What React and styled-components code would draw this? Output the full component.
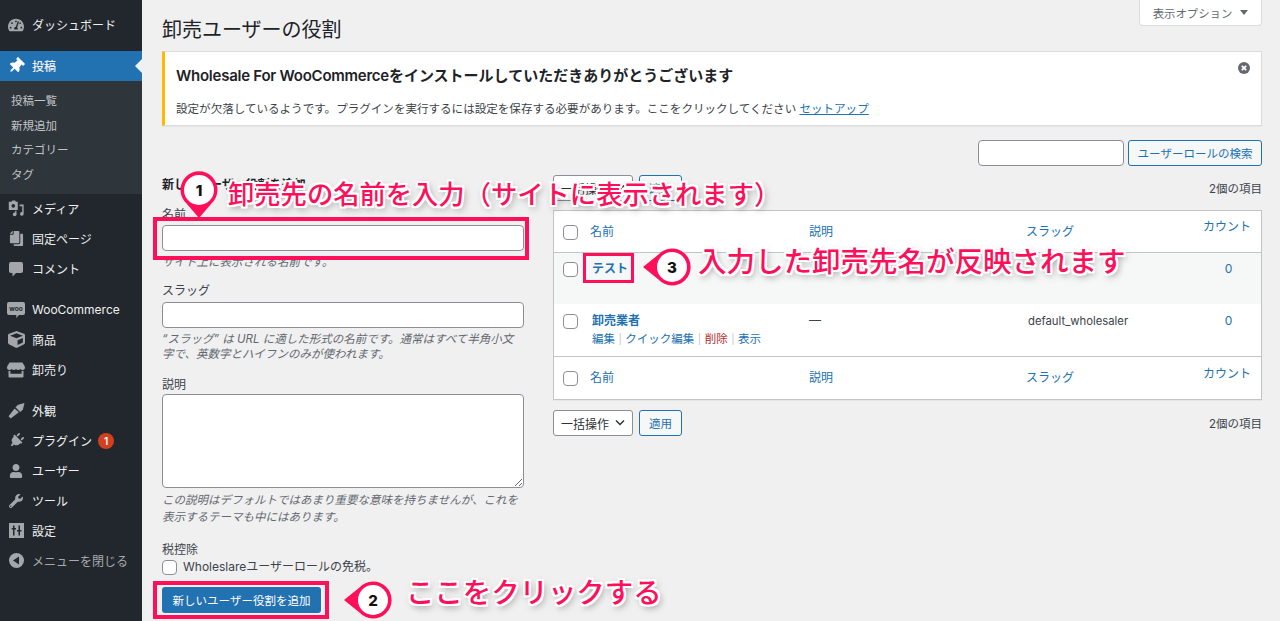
import React from "react";
import styled, { createGlobalStyle } from "styled-components";
import {
  FaTachometerAlt, FaThumbtack, FaCopy, FaCube, FaStore, FaPlug, FaUser, FaWrench,
} from "react-icons/fa";

const Global = createGlobalStyle`
  html, body { margin: 0; padding: 0; height: 621px; overflow: hidden; background: #f0f0f1; }
  * { box-sizing: border-box; }
  body { font-family: "Inter", "Noto Sans CJK JP", sans-serif; font-size: 12px; color: #3c434a; }
`;

const Shell = styled.div`
  position: relative; display: flex; width: 1280px; height: 621px; overflow: hidden;
`;

/* ---------- sidebar ---------- */
const Sidebar = styled.nav`
  width: 142px; flex: none; height: 100%; background: #21272c; padding-top: 10px;
  display: flex; flex-direction: column;
`;
const MenuItem = styled.div`
  position: relative; display: flex; align-items: center; height: 30px; flex: none;
  margin-top: ${p => p.$gap || 0}px; padding: 0 0 1px 8px; gap: 8px;
  font-size: 12px; color: ${p => p.$muted ? "#a7aaad" : "#f0f0f1"};
  background: ${p => p.$active ? "#2271b1" : "transparent"};
  font-weight: ${p => p.$active ? 500 : 400};
  ${p => p.$active && `
    &::after {
      content: ""; position: absolute; right: 0; top: 8px;
      border: 7px solid transparent; border-right-color: #f0f0f1; border-left-width: 0;
    }
  `}
`;
const MenuIcon = styled.span`
  width: 16px; height: 16px; flex: none; display: flex; align-items: center; justify-content: center;
  color: ${p => p.$active ? "#ffffff" : "#a3a7ab"};
  font-size: ${p => p.$size || 15}px;
  svg { display: block; flex: none; }
`;
const SubMenu = styled.div`
  background: #2e353b; padding: 8px 0 7px 11px; flex: none;
`;
const SubItem = styled.div`
  height: 24.5px; line-height: 24.5px; font-size: 11.5px; color: #c3c4c7;
`;
const Badge = styled.span`
  width: 16px; height: 16px; margin-left: -2px; border-radius: 50%; background: #d1411f; color: #fff;
  font-size: 10px; font-weight: 600; display: flex; align-items: center; justify-content: center;
`;

/* ---------- main ---------- */
const Main = styled.main`
  flex: 1; min-width: 0; padding: 0 18px 0 20px; display: flex; flex-direction: column;
`;
const TitleRow = styled.div`
  display: flex; justify-content: space-between; align-items: flex-start; height: 51px; flex: none;
`;
const Title = styled.h1`
  margin: 17px 0 0; font-size: 20px; line-height: 26px; font-weight: 400; color: #1d2327;
`;
const ScreenTab = styled.div`
  width: 123px; height: 26px; background: #fff; border: 1px solid #dcdcde; border-top: 0;
  border-radius: 0 0 4px 4px; display: flex; align-items: center; justify-content: center; gap: 8px;
  font-size: 11.4px; color: #646970;
`;
const TabCaret = styled.span`
  border: 4.5px solid transparent; border-top: 5px solid #646970; border-bottom: 0;
`;
const Notice = styled.section`
  position: relative; height: 75px; flex: none; background: #fff;
  border: 1px solid #dcdcde; border-left: 3px solid #ffb900;
  padding: 14px 0 0 11px; box-shadow: 0 1px 1px rgba(0,0,0,.04);
`;
const NoticeTitle = styled.div`
  font-size: 15px; line-height: 20px; font-weight: 600; color: #1d2327;
`;
const Latin = styled.span`
  letter-spacing: -0.25px;
`;
const NoticeText = styled.div`
  margin-top: 14px; font-size: 11.55px; line-height: 18px; color: #3c434a;
`;
const Link = styled.a`
  color: #2271b1; text-decoration: underline;
`;
const Dismiss = styled.span`
  position: absolute; right: 11px; top: 10px; width: 12px; height: 12px; svg { display: block; }
`;
const SearchRow = styled.div`
  display: flex; justify-content: flex-end; gap: 4px; margin-top: 14px; flex: none;
`;
const TextInput = styled.input`
  display: block; width: ${p => p.$w || "100%"}; height: 26px; background: #fff; margin: 0;
  border: 1px solid #8c8f94; border-radius: 4px; outline: none;
`;
const OutlineButton = styled.div`
  width: ${p => p.$w}px; height: 26px; display: flex; align-items: center; justify-content: center;
  background: #f6f7f7; color: #2271b1; border: 1px solid #2271b1; border-radius: 3px; font-size: 11.5px;
`;
const Columns = styled.div`
  display: grid; grid-template-columns: 362px 709px; column-gap: 29px; margin-top: 9px;
`;

/* ---------- form ---------- */
const Form = styled.form`
  display: flex; flex-direction: column; margin: 0;
`;
const FormHeading = styled.h2`
  margin: 0 0 12px; font-size: 12px; line-height: 20px; font-weight: 700; color: #1d2327;
`;
const Field = styled.div`
  margin-bottom: ${p => p.$mb ?? 12}px;
`;
const FieldLabel = styled.label`
  display: block; font-size: 12px; line-height: 16px; margin-bottom: ${p => p.$mb ?? 2}px; color: #3c434a;
`;
const Hint = styled.p`
  margin: ${p => p.$mt || 3}px 0 0; font-size: 11.5px; font-style: italic; color: #646970; line-height: ${p => p.$lh || 17}px;
`;
const TextArea = styled.textarea`
  display: block; width: 100%; height: 94px; background: #fff; margin: 0;
  border: 1px solid #8c8f94; border-radius: 4px; outline: none;
`;
const Check = styled.input.attrs({ type: "checkbox" })`
  appearance: none; width: 15px; height: 15px; margin: 0; flex: none; background: #fff;
  border: 1px solid #8c8f94; border-radius: 4px; display: block;
`;
const CheckRow = styled.div`
  display: flex; align-items: center; gap: 6px; font-size: 12px; line-height: 16px; color: #3c434a; margin-top: -1px;
`;
const Primary = styled.div`
  width: 159px; height: 26px; margin-top: 12px; background: #2271b1; color: #fff; font-size: 11.5px; border-radius: 3px;
  display: flex; align-items: center; justify-content: center;
`;

/* ---------- table ---------- */
const TableNav = styled.div`
  display: flex; align-items: center; gap: 6px; height: 26px;
`;
const SelectBox = styled.div`
  width: 80px; height: 26px; background: #fff; border: 1px solid #8c8f94; border-radius: 3px;
  display: flex; align-items: center; justify-content: space-between; padding: 0 6px 0 7px;
  font-size: 12px; color: #2c3338;
`;
const Count = styled.div`
  margin-left: auto; font-size: 11.5px; color: #3c434a;
`;
const Table = styled.div`
  margin: ${p => p.$m}; background: #fff; border: 1px solid #c3c4c7; box-shadow: 0 1px 1px rgba(0,0,0,.04);
`;
const Row = styled.div`
  display: grid; grid-template-columns: 36px 219px 217px 165px 1fr;
  height: ${p => p.$h}px; background: ${p => p.$alt ? "#f6f7f7" : "#fff"};
  border-bottom: ${p => p.$line ? "1px solid #c3c4c7" : "0"};
`;
const CheckCell = styled.div`
  padding: ${p => p.$top}px 0 0 9px;
`;
const Cell = styled.div`
  padding-top: ${p => p.$top || 0}px; font-size: 12px; line-height: 18px; color: #3c434a;
`;
const CountHead = styled(Cell)`
  padding-left: 12px;
`;
const CountCell = styled(Cell)`
  text-align: center; padding-left: 5px;
`;
const SlugCell = styled(Cell)`
  font-size: 11.3px; padding-left: 2px;
`;
const HeadLink = styled.span`
  color: #2271b1; font-size: 12px; line-height: 18px;
`;
const RowTitle = styled.span`
  color: #2271b1; font-weight: 600; font-size: 12px; line-height: 18px; display: block; margin-left: 2px;
`;
const RowActions = styled.div`
  margin: 0 0 0 2px; display: flex; align-items: center; font-size: 11.5px; line-height: 18px; color: #2271b1;
`;
const Sep = styled.span`
  margin: 0 3.5px; color: #c3c4c7; font-size: 10px;
`;
const Danger = styled.span`
  color: #b32d2e;
`;

/* ---------- annotation overlay ---------- */
const PINK = "#ff0f5a";
const Frame = styled.div`
  position: absolute; left: ${p => p.$x}px; top: ${p => p.$y}px; width: ${p => p.$w}px; height: ${p => p.$h}px;
  border: ${p => p.$b || 4}px solid ${PINK};
`;
const Callout = styled.div`
  position: absolute; left: ${p => p.$x}px; top: ${p => p.$y}px; color: ${PINK}; white-space: nowrap;
  font-size: ${p => p.$size}px; line-height: 36px; font-weight: 500;
  text-shadow:
    -2px 0 0 #fff, 2px 0 0 #fff, 0 -2px 0 #fff, 0 2px 0 #fff,
    -2px -2px 0 #fff, 2px -2px 0 #fff, -2px 2px 0 #fff, 2px 2px 0 #fff,
    2px 3px 7px rgba(0,0,0,.5);
`;
const Bubble = styled.div`
  position: absolute; left: ${p => p.$x}px; top: ${p => p.$y}px; width: ${p => p.$w}px; height: ${p => p.$h}px;
  svg { position: absolute; inset: 0; display: block; }
`;
const BubbleNum = styled.span`
  position: absolute; left: ${p => p.$cx - 12}px; top: ${p => p.$cy - 12}px; width: 24px; height: 24px;
  display: flex; align-items: center; justify-content: center;
  font-size: 15px; font-weight: 800; color: #111;
`;

const Media = () => (
  <svg width="18" height="18" viewBox="0 0 20 20" fill="currentColor">
    <path d="M2 2h3l1-1.500h3L10 2h2v9H2z M7 4.500a2 2 0 1 0 .01 0z" fillRule="evenodd" />
    <path d="M14 5h4.500v10.500a2 2 0 1 1-1.600-2V7H14z" />
    <circle cx="8.500" cy="16" r="2" />
    <path d="M9 12h1.500v4H9z" />
  </svg>
);
const Comment = () => (
  <svg width="16" height="16" viewBox="0 0 16 16" fill="currentColor">
    <path d="M3 1h10a2 2 0 0 1 2 2v7a2 2 0 0 1-2 2H8l-3.500 3.500V12H3a2 2 0 0 1-2-2V3a2 2 0 0 1 2-2z" />
  </svg>
);
const Brush = () => (
  <svg width="17" height="17" viewBox="0 0 16 16" fill="currentColor">
    <path d="M.5 13.500L6.200 6l4 3.600L2.500 15.500z" />
    <path d="M7 5l2.500-2.500 6-1.500-1.500 6-2.500 2.500z" />
  </svg>
);
const Woo = () => (
  <svg width="18" height="16" viewBox="0 0 18 16">
    <path d="M2 0h14a2 2 0 0 1 2 2v9a2 2 0 0 1-2 2h-4l-3 3 .5-3H2a2 2 0 0 1-2-2V2a2 2 0 0 1 2-2z" fill="currentColor" />
    <text x="9" y="9" textAnchor="middle" fontSize="6.500" fontWeight="700" fill="#21272c" fontFamily="Inter, sans-serif">woo</text>
  </svg>
);
const Settings = () => (
  <svg width="15" height="15" viewBox="0 0 15 15">
    <path d="M0 0h15v15H0z" fill="currentColor" />
    <path d="M3 2.500h1.500V5H6v1.500H4.500v6H3v-6H1.700V5H3z M8.500 2.500H10v4.500h1.500v1.500H10v4H8.500v-4H7V7h1.500z" fill="#21272c" transform="translate(1 0)" />
  </svg>
);
const Collapse = () => (
  <svg width="15" height="15" viewBox="0 0 15 15">
    <circle cx="7.500" cy="7.500" r="7.500" fill="currentColor" />
    <path d="M10 3.500v8L4 7.500z" fill="#21272c" />
  </svg>
);
const Chevron = () => (
  <svg width="12" height="8" viewBox="0 0 12 8" fill="none" stroke="#2c3338" strokeWidth="1.500"><path d="M2 1.500l4 4 4-4" /></svg>
);
const LeftPin = () => (
  <svg width="52" height="40" viewBox="0 0 52 40">
    <path d="M2 20L17.500 7.500A18.500 18.500 0 1 1 17.500 32.500z" fill={PINK} />
    <circle cx="31" cy="20" r="15" fill="#fff" />
  </svg>
);
const DownPin = () => (
  <svg width="40" height="50" viewBox="0 0 40 50">
    <path d="M20 48L7.500 33.500A18.500 18.500 0 1 1 32.500 33.500z" fill={PINK} />
    <circle cx="20" cy="20" r="15" fill="#fff" />
  </svg>
);

export default function App() {
  return (
    <>
      <Global />
      <Shell>
        <Sidebar>
          <MenuItem><MenuIcon $size={16}><FaTachometerAlt /></MenuIcon>ダッシュボード</MenuItem>
          <MenuItem $active $gap={11}>
            <MenuIcon $active $size={16}><FaThumbtack style={{ transform: "rotate(45deg)" }} /></MenuIcon>投稿
          </MenuItem>
          <SubMenu>
            <SubItem>投稿一覧</SubItem>
            <SubItem>新規追加</SubItem>
            <SubItem>カテゴリー</SubItem>
            <SubItem>タグ</SubItem>
          </SubMenu>
          <MenuItem><MenuIcon><Media /></MenuIcon>メディア</MenuItem>
          <MenuItem><MenuIcon><FaCopy style={{ transform: "scaleX(-1)" }} /></MenuIcon>固定ページ</MenuItem>
          <MenuItem><MenuIcon><Comment /></MenuIcon>コメント</MenuItem>
          <MenuItem $gap={11}><MenuIcon><Woo /></MenuIcon>WooCommerce</MenuItem>
          <MenuItem><MenuIcon $size={17}><FaCube /></MenuIcon>商品</MenuItem>
          <MenuItem><MenuIcon $size={18}><FaStore /></MenuIcon>卸売り</MenuItem>
          <MenuItem $gap={11}><MenuIcon><Brush /></MenuIcon>外観</MenuItem>
          <MenuItem><MenuIcon><FaPlug style={{ transform: "rotate(45deg)" }} /></MenuIcon>プラグイン<Badge>1</Badge></MenuItem>
          <MenuItem><MenuIcon $size={14}><FaUser /></MenuIcon>ユーザー</MenuItem>
          <MenuItem><MenuIcon $size={14}><FaWrench /></MenuIcon>ツール</MenuItem>
          <MenuItem><MenuIcon><Settings /></MenuIcon>設定</MenuItem>
          <MenuItem $muted><MenuIcon><Collapse /></MenuIcon>メニューを閉じる</MenuItem>
        </Sidebar>

        <Main>
          <TitleRow>
            <Title>卸売ユーザーの役割</Title>
            <ScreenTab>表示オプション<TabCaret /></ScreenTab>
          </TitleRow>

          <Notice>
            <NoticeTitle><Latin>Wholesale For WooCommerce</Latin>をインストールしていただきありがとうございます</NoticeTitle>
            <NoticeText>設定が欠落しているようです。プラグインを実行するには設定を保存する必要があります。ここをクリックしてください <Link>セットアップ</Link></NoticeText>
            <Dismiss>
              <svg width="12" height="12" viewBox="0 0 12 12">
                <circle cx="6" cy="6" r="6" fill="#646970" />
                <path d="M3.800 3.800l4.400 4.400M8.200 3.800l-4.400 4.400" stroke="#fff" strokeWidth="1.800" />
              </svg>
            </Dismiss>
          </Notice>

          <SearchRow>
            <TextInput $w="146px" />
            <OutlineButton $w={134}>ユーザーロールの検索</OutlineButton>
          </SearchRow>

          <Columns>
            <Form>
              <FormHeading>新しいユーザー役割を追加</FormHeading>
              <Field>
                <FieldLabel>名前</FieldLabel>
                <TextInput />
                <Hint>サイト上に表示される名前です。</Hint>
              </Field>
              <Field $mb={15}>
                <FieldLabel $mb={3}>スラッグ</FieldLabel>
                <TextInput />
                <Hint $lh={15} $mt={4}>“スラッグ” は URL に適した形式の名前です。通常はすべて半角小文字で、英数字とハイフンのみが使われます。</Hint>
              </Field>
              <Field $mb={16}>
                <FieldLabel $mb={1}>説明</FieldLabel>
                <TextArea />
                <Hint $mt={4}>この説明はデフォルトではあまり重要な意味を持ちませんが、これを表示するテーマも中にはあります。</Hint>
              </Field>
              <FieldLabel>税控除</FieldLabel>
              <CheckRow><Check />Wholeslareユーザーロールの免税。</CheckRow>
              <Primary>新しいユーザー役割を追加</Primary>
            </Form>

            <div>
              <TableNav>
                <SelectBox>一括操作<Chevron /></SelectBox>
                <OutlineButton $w={43}>適用</OutlineButton>
                <Count>2個の項目</Count>
              </TableNav>
              <Table $m="9px 0 10px">
                <Row $h={42} $line>
                  <CheckCell $top={14}><Check /></CheckCell>
                  <Cell $top={12}><HeadLink>名前</HeadLink></Cell>
                  <Cell $top={12}><HeadLink>説明</HeadLink></Cell>
                  <Cell $top={12}><HeadLink>スラッグ</HeadLink></Cell>
                  <CountHead $top={7}><HeadLink>カウント</HeadLink></CountHead>
                </Row>
                <Row $h={51} $alt>
                  <CheckCell $top={9}><Check /></CheckCell>
                  <Cell $top={7}><RowTitle>テスト</RowTitle></Cell>
                  <Cell />
                  <Cell />
                  <CountCell $top={7}><HeadLink>0</HeadLink></CountCell>
                </Row>
                <Row $h={53} $line>
                  <CheckCell $top={10}><Check /></CheckCell>
                  <Cell $top={8}>
                    <RowTitle>卸売業者</RowTitle>
                    <RowActions>編集<Sep>|</Sep>クイック編集<Sep>|</Sep><Danger>削除</Danger><Sep>|</Sep>表示</RowActions>
                  </Cell>
                  <Cell $top={7}>—</Cell>
                  <SlugCell $top={8}>default_wholesaler</SlugCell>
                  <CountCell $top={8}><HeadLink>0</HeadLink></CountCell>
                </Row>
                <Row $h={42}>
                  <CheckCell $top={14}><Check /></CheckCell>
                  <Cell $top={12}><HeadLink>名前</HeadLink></Cell>
                  <Cell $top={12}><HeadLink>説明</HeadLink></Cell>
                  <Cell $top={12}><HeadLink>スラッグ</HeadLink></Cell>
                  <CountHead $top={8}><HeadLink>カウント</HeadLink></CountHead>
                </Row>
              </Table>
              <TableNav>
                <SelectBox>一括操作<Chevron /></SelectBox>
                <OutlineButton $w={43}>適用</OutlineButton>
                <Count>2個の項目</Count>
              </TableNav>
            </div>
          </Columns>
        </Main>

        <Frame $x={153} $y={217} $w={376} $h={43} />
        <Frame $x={153} $y={581} $w={176} $h={38} />
        <Frame $x={583} $y={253} $w={51} $h={30} $b={3.5} />

        <Bubble $x={179} $y={170} $w={40} $h={50}>
          <DownPin />
          <BubbleNum $cx={20} $cy={20}>1</BubbleNum>
        </Bubble>
        <Bubble $x={342} $y={580} $w={52} $h={40}>
          <LeftPin />
          <BubbleNum $cx={31} $cy={20}>2</BubbleNum>
        </Bubble>
        <Bubble $x={641} $y={247} $w={52} $h={40}>
          <LeftPin />
          <BubbleNum $cx={31} $cy={20}>3</BubbleNum>
        </Bubble>

        <Callout $x={228} $y={177} $size={26.3}>卸売先の名前を入力（サイトに表示されます）</Callout>
        <Callout $x={406} $y={575} $size={28.4}>ここをクリックする</Callout>
        <Callout $x={698} $y={244} $size={28.5}>入力した卸売先名が反映されます</Callout>
      </Shell>
    </>
  );
}
